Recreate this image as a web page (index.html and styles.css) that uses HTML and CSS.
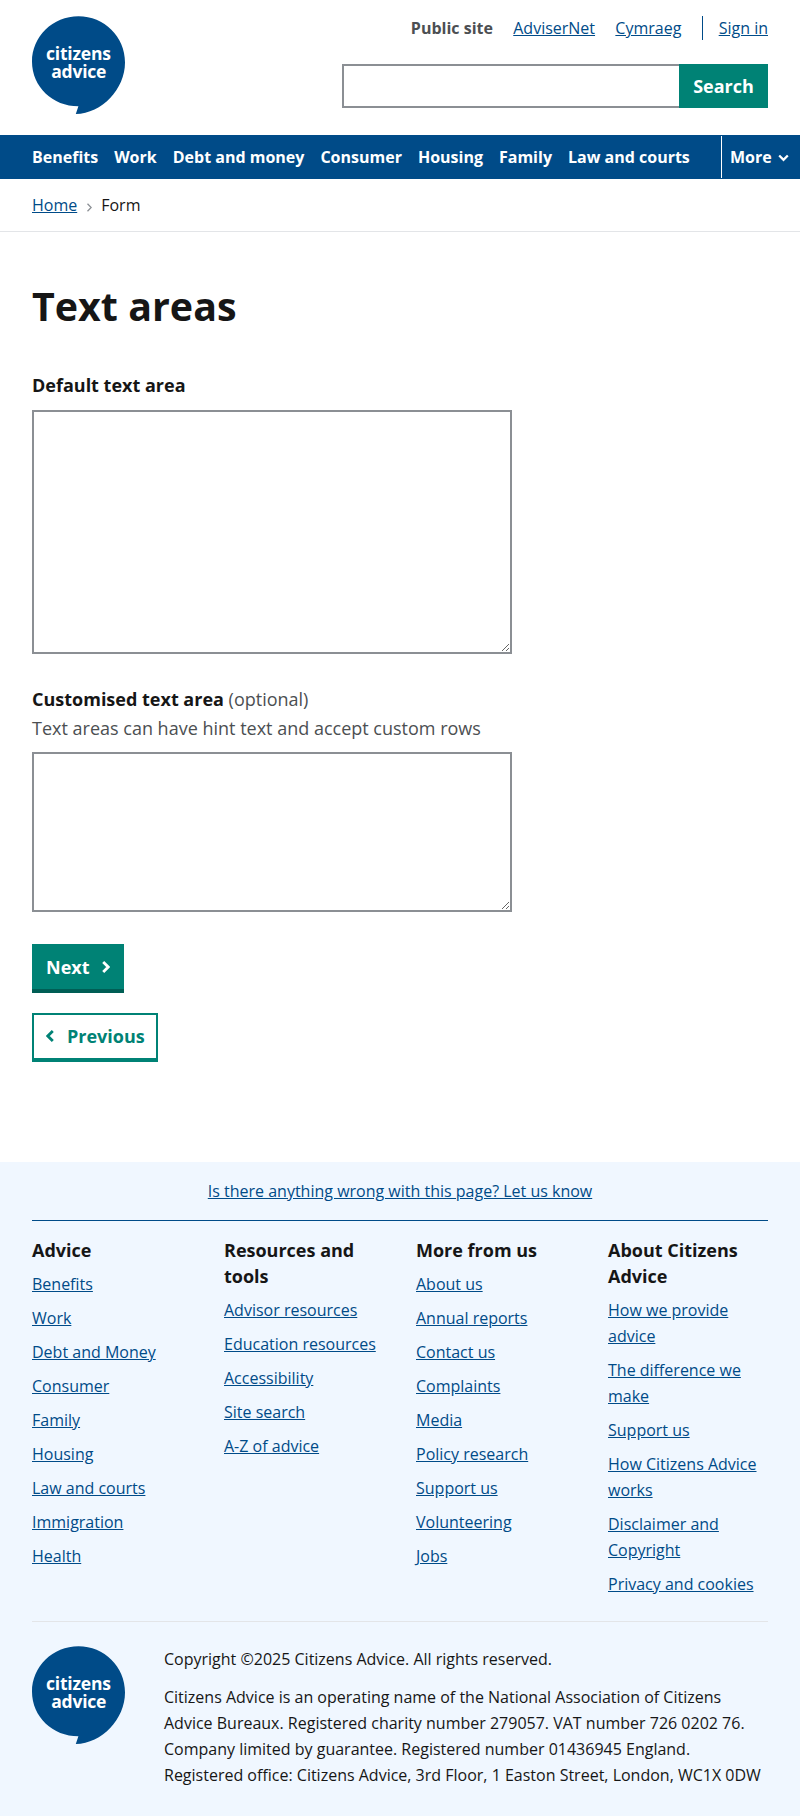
FILE: index.html
```html
<!DOCTYPE html>
<html lang="en">
<head>
<meta charset="utf-8">
<title>Text areas</title>
<link rel="stylesheet" href="styles.css">
</head>
<body>
<header class="header">
  <a class="logo" href="#"><svg width="93" height="98" viewBox="0 0 93 98" role="img" aria-label="Citizens Advice"><path class="logo-bubble" d="M46.500.2C20.800.2 0 20.400 0 45.700c0 25 20.800 44.600 46.400 44.600L43.800 98C70 97.500 93 73 93 46.500 93 20.500 72.200.2 46.500.2Z"/><text class="logo-text" x="46.500" y="43.500" textLength="65">citizens</text><text class="logo-text" x="46.800" y="61.800" textLength="55">advice</text></svg></a>
  <div class="header-side">
    <div class="header-links"><strong>Public site</strong><a href="#">AdviserNet</a><a href="#">Cymraeg</a><span class="sign-in"><a href="#">Sign in</a></span></div>
    <form class="search"><input class="search-input" aria-label="Search"><button class="search-button" type="button">Search</button></form>
  </div>
</header>
<nav class="nav">
  <div class="nav-links"><a href="#">Benefits</a><a href="#">Work</a><a href="#">Debt and money</a><a href="#">Consumer</a><a href="#">Housing</a><a href="#">Family</a><a href="#">Law and courts</a></div>
  <button class="nav-more" type="button">More <svg width="11" height="8" viewBox="0 0 11 8"><path d="M1.200 1.500 5.500 5.800 9.800 1.500" fill="none" stroke="currentColor" stroke-width="2.300"/></svg></button>
</nav>
<div class="breadcrumbs"><a href="#">Home</a><svg width="5" height="9" viewBox="0 0 5 9"><path d="M.5.700 4.200 4.500.5 8.300" fill="none" stroke="#8b8f94" stroke-width="1.300"/></svg><span>Form</span></div>
<main class="main">
  <h1 class="title">Text areas</h1>
  <div class="field">
    <label class="label" for="a">Default text area</label>
    <textarea class="textarea textarea-default" id="a"></textarea>
  </div>
  <div class="field">
    <label class="label" for="b">Customised text area <span class="muted">(optional)</span></label>
    <p class="hint">Text areas can have hint text and accept custom rows</p>
    <textarea class="textarea textarea-short" id="b"></textarea>
  </div>
  <div class="actions">
    <button class="button button-primary" type="button">Next<svg width="8" height="12" viewBox="0 0 8 12"><path d="M1.200 1 6.200 6l-5 5" fill="none" stroke="currentColor" stroke-width="2.800"/></svg></button>
    <button class="button button-secondary" type="button"><svg width="8" height="12" viewBox="0 0 8 12"><path d="M6.800 1 1.800 6l5 5" fill="none" stroke="currentColor" stroke-width="2.800"/></svg>Previous</button>
  </div>
</main>
<footer class="footer">
  <div class="feedback"><a href="#">Is there anything wrong with this page? Let us know</a></div>
  <div class="columns">
    <section><h2>Advice</h2><ul><li><a href="#">Benefits</a></li><li><a href="#">Work</a></li><li><a href="#">Debt and Money</a></li><li><a href="#">Consumer</a></li><li><a href="#">Family</a></li><li><a href="#">Housing</a></li><li><a href="#">Law and courts</a></li><li><a href="#">Immigration</a></li><li><a href="#">Health</a></li></ul></section>
    <section><h2>Resources and tools</h2><ul><li><a href="#">Advisor resources</a></li><li><a href="#">Education resources</a></li><li><a href="#">Accessibility</a></li><li><a href="#">Site search</a></li><li><a href="#">A-Z of advice</a></li></ul></section>
    <section><h2>More from us</h2><ul><li><a href="#">About us</a></li><li><a href="#">Annual reports</a></li><li><a href="#">Contact us</a></li><li><a href="#">Complaints</a></li><li><a href="#">Media</a></li><li><a href="#">Policy research</a></li><li><a href="#">Support us</a></li><li><a href="#">Volunteering</a></li><li><a href="#">Jobs</a></li></ul></section>
    <section><h2>About Citizens Advice</h2><ul><li><a href="#">How we provide advice</a></li><li><a href="#">The difference we make</a></li><li><a href="#">Support us</a></li><li><a href="#">How Citizens Advice works</a></li><li><a href="#">Disclaimer and Copyright</a></li><li><a href="#">Privacy and cookies</a></li></ul></section>
  </div>
  <div class="legal">
    <a class="logo" href="#"><svg width="93" height="98" viewBox="0 0 93 98" role="img" aria-label="Citizens Advice"><path class="logo-bubble" d="M46.500.2C20.800.2 0 20.400 0 45.700c0 25 20.800 44.600 46.400 44.600L43.800 98C70 97.500 93 73 93 46.500 93 20.500 72.200.2 46.500.2Z"/><text class="logo-text" x="46.500" y="43.500" textLength="65">citizens</text><text class="logo-text" x="46.800" y="61.800" textLength="55">advice</text></svg></a>
    <div class="legal-text">
      <p>Copyright ©2025 Citizens Advice. All rights reserved.</p>
      <p>Citizens Advice is an operating name of the National Association of Citizens Advice Bureaux. Registered charity number 279057. VAT number 726 0202 76. Company limited by guarantee. Registered number 01436945 England. Registered office: Citizens Advice, 3rd Floor, 1 Easton Street, London, WC1X 0DW</p>
    </div>
  </div>
</footer>
</body>
</html>
```
FILE: styles.css
```css
*, *::before, *::after { box-sizing: border-box; }
body { margin: 0; background: #fff; color: #161616; font: 16px/26px "Open Sans", sans-serif; }
a { color: #004b88; }
h1, h2, p, ul { margin: 0; padding: 0; }
button, input, textarea { font: inherit; margin: 0; border-radius: 0; }

.header { display: flex; justify-content: space-between; height: 135px; padding: 16px 32px 0; }
.logo { display: block; flex: none; width: 93px; height: 98px; }
.logo svg { display: block; }
.logo-bubble { fill: #004b88; }
.logo-text { fill: #fff; font-weight: 700; font-size: 17.5px; text-anchor: middle; }
.header-side { width: 426px; }
.header-links { display: flex; justify-content: flex-end; gap: 20.3px; height: 24px; line-height: 24px; }
.header-links strong { color: #4c4f52; }
.sign-in { border-left: 1px solid #004b88; padding-left: 16px; }
.search { display: flex; margin-top: 24px; height: 44px; }
.search-input { flex: 1; min-width: 0; border: 2px solid #8b8f94; border-right: 0; background: #fff; }
.search-button { width: 89px; padding: 0; border: 0; background: #008275; color: #fff; font-weight: 700; font-size: 18px; }

.nav { display: flex; justify-content: space-between; height: 44px; background: #004b88; }
.nav-links { display: flex; gap: 16px; padding-left: 32px; line-height: 44px; font-weight: 700; }
.nav-links a { color: #fff; text-decoration: none; }
.nav-more { display: flex; align-items: center; gap: 6px; width: 79px; margin: 1px 0; padding: 0 0 0 8px; border: 0; border-left: 1px solid #fff; background: none; color: #fff; font-weight: 700; }
.nav-more svg { margin-top: 2px; }

.breadcrumbs { display: flex; align-items: center; gap: 9.5px; height: 53px; padding: 0 32px; border-bottom: 1px solid #e3e5e8; }
.breadcrumbs svg { margin-top: 4px; }

.main { padding: 47px 32px 100px; }
.title { font-size: 39.4px; line-height: 54px; margin-bottom: 38px; }
.field { margin-bottom: 31px; font-size: 18px; line-height: 29px; }
.label { display: block; font-weight: 700; }
.muted { font-weight: 400; }
.muted, .hint { color: #4c4f52; }
.textarea { display: block; width: 480px; margin-top: 10px; border: 2px solid #8b8f94; background: #fff; }
.textarea-default { height: 244px; }
.textarea-short { height: 160px; margin-top: 9px; }
.actions { display: flex; flex-direction: column; align-items: flex-start; gap: 20px; padding-top: 1px; }
.button { display: flex; align-items: center; gap: 12px; height: 49px; font-size: 18px; font-weight: 700; }
.button-primary { padding: 1px 14px 0; border: 0; border-bottom: 4px solid #005e55; background: #008275; color: #fff; }
.button-secondary { gap: 13px; padding: 0 11px 1px 12px; border: 2px solid #008275; border-bottom-width: 4px; background: #fff; color: #008275; }

.footer { min-height: 654px; padding: 0 32px 21px; background: #f0f7ff; }
.feedback { height: 59px; padding-top: 16px; border-bottom: 1px solid #004b88; text-align: center; }
.columns { display: grid; grid-template-columns: repeat(4, 1fr); gap: 32px; padding: 16px 0; border-bottom: 1px solid #e3e5e8; }
.columns h2 { font-size: 18px; line-height: 26px; margin-bottom: 8px; }
.columns ul { list-style: none; }
.columns li { margin-bottom: 8px; }
.legal { display: flex; gap: 39px; padding-top: 24px; }
.legal-text p + p { margin-top: 12px; }
```
